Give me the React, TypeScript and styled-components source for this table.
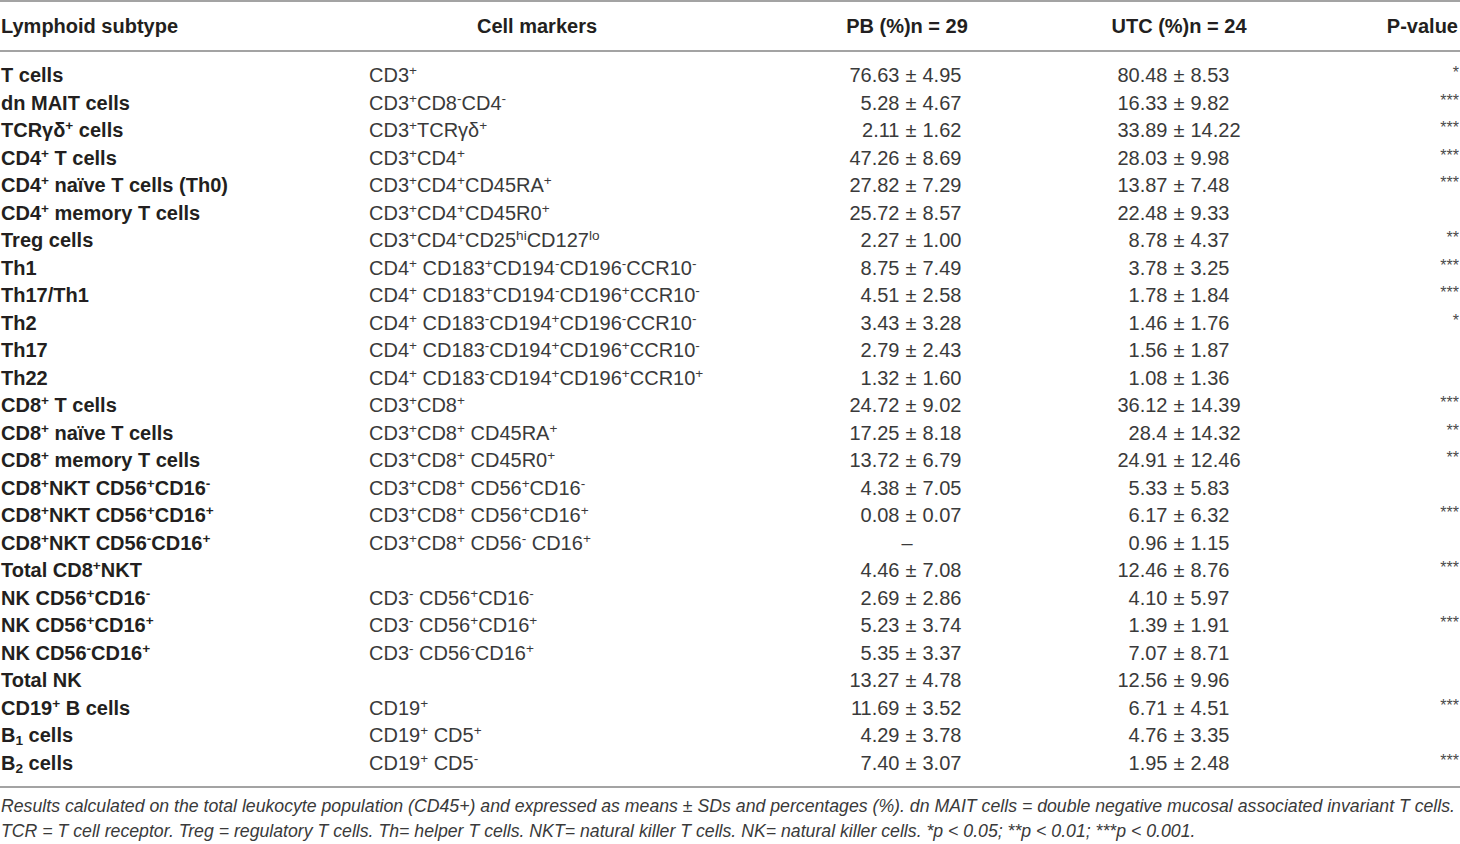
import React from "react"
import styled, { createGlobalStyle } from "styled-components"

const GlobalStyle = createGlobalStyle`
  body {
    margin: 0;
    background: #ffffff;
    font-family: "Liberation Sans", Arial, sans-serif;
    color: #231f20;
  }
`

const COLUMNS = "368px 336px 404px 140px 1fr"

const Page = styled.div`
  width: 1460px;
  padding-left: 1px;
  box-sizing: border-box;
`

const HeadRow = styled.div`
  display: grid;
  grid-template-columns: ${COLUMNS};
  align-items: center;
  height: 48px;
  border-top: 2px solid #a3a3a3;
  border-bottom: 2px solid #a3a3a3;
  margin-left: -1px;
  padding-left: 1px;
`

const HeadCell = styled.div<{ $align?: "left" | "center" | "right" }>`
  font-weight: 700;
  font-size: 20px;
  text-align: ${(p) => p.$align || "center"};
  white-space: nowrap;
  padding-right: ${(p) => (p.$align === "right" ? "2px" : "0")};
`

const Body = styled.div`
  padding: 10px 0 9px;
  border-bottom: 2px solid #a3a3a3;
  margin-left: -1px;
  padding-left: 1px;
`

const Row = styled.div`
  display: grid;
  grid-template-columns: ${COLUMNS};
  align-items: center;
  height: 27.5px;
  font-size: 20px;
  white-space: nowrap;
`

const Subtype = styled.div`
  font-weight: 700;
  color: #231f20;
`

const Markers = styled.div`
  color: #3a3a3a;
`

const Value = styled.div<{ $offset: number }>`
  display: grid;
  grid-template-columns: 1fr auto 1fr;
  padding-left: ${(p) => p.$offset}px;
  color: #3a3a3a;
`

const Mean = styled.span`
  text-align: right;
`

const Pm = styled.span`
  padding: 0 6px;
`

const Sd = styled.span`
  text-align: left;
`

const Dash = styled.div`
  text-align: center;
  color: #3a3a3a;
`

const Stars = styled.div`
  text-align: right;
  font-size: 16px;
  color: #4a4a4a;
  align-self: start;
  padding-top: 2px;
  padding-right: 1px;
`

const Sup = styled.sup`
  font-size: 0.68em;
  line-height: 0;
  vertical-align: 0.5em;
`

const Sub = styled.sub`
  font-size: 0.68em;
  line-height: 0;
  vertical-align: -0.25em;
`

const Note = styled.p`
  margin: 0;
  padding-top: 6px;
  font-style: italic;
  font-size: 17.7px;
  line-height: 25px;
  color: #3a3a3a;
  white-space: nowrap;
`

// ^x / ^{xx} = superscript, _x / _{xx} = subscript
const fmt = (s: string) =>
  s.split(/(\^\{[^}]*\}|\^.|_\{[^}]*\}|_.)/).map((part, i) => {
    if (part.startsWith("^")) {
      return <Sup key={i}>{part.slice(1).replace(/[{}]/g, "")}</Sup>
    }
    if (part.startsWith("_")) {
      return <Sub key={i}>{part.slice(1).replace(/[{}]/g, "")}</Sub>
    }
    return part
  })

type Entry = [string, string, string, string, string]

const rows: Entry[] = [
  ["T cells", "CD3^+", "76.63 ± 4.95", "80.48 ± 8.53", "*"],
  ["dn MAIT cells", "CD3^+CD8^-CD4^-", "5.28 ± 4.67", "16.33 ± 9.82", "***"],
  ["TCRγδ^+ cells", "CD3^+TCRγδ^+", "2.11 ± 1.62", "33.89 ± 14.22", "***"],
  ["CD4^+ T cells", "CD3^+CD4^+", "47.26 ± 8.69", "28.03 ± 9.98", "***"],
  ["CD4^+ naïve T cells (Th0)", "CD3^+CD4^+CD45RA^+", "27.82 ± 7.29", "13.87 ± 7.48", "***"],
  ["CD4^+ memory T cells", "CD3^+CD4^+CD45R0^+", "25.72 ± 8.57", "22.48 ± 9.33", ""],
  ["Treg cells", "CD3^+CD4^+CD25^{hi}CD127^{lo}", "2.27 ± 1.00", "8.78 ± 4.37", "**"],
  ["Th1", "CD4^+ CD183^+CD194^-CD196^-CCR10^-", "8.75 ± 7.49", "3.78 ± 3.25", "***"],
  ["Th17/Th1", "CD4^+ CD183^+CD194^-CD196^+CCR10^-", "4.51 ± 2.58", "1.78 ± 1.84", "***"],
  ["Th2", "CD4^+ CD183^-CD194^+CD196^-CCR10^-", "3.43 ± 3.28", "1.46 ± 1.76", "*"],
  ["Th17", "CD4^+ CD183^-CD194^+CD196^+CCR10^-", "2.79 ± 2.43", "1.56 ± 1.87", ""],
  ["Th22", "CD4^+ CD183^-CD194^+CD196^+CCR10^+", "1.32 ± 1.60", "1.08 ± 1.36", ""],
  ["CD8^+ T cells", "CD3^+CD8^+", "24.72 ± 9.02", "36.12 ± 14.39", "***"],
  ["CD8^+ naïve T cells", "CD3^+CD8^+ CD45RA^+", "17.25 ± 8.18", "28.4 ± 14.32", "**"],
  ["CD8^+ memory T cells", "CD3^+CD8^+ CD45R0^+", "13.72 ± 6.79", "24.91 ± 12.46", "**"],
  ["CD8^+NKT CD56^+CD16^-", "CD3^+CD8^+ CD56^+CD16^-", "4.38 ± 7.05", "5.33 ± 5.83", ""],
  ["CD8^+NKT CD56^+CD16^+", "CD3^+CD8^+ CD56^+CD16^+", "0.08 ± 0.07", "6.17 ± 6.32", "***"],
  ["CD8^+NKT CD56^-CD16^+", "CD3^+CD8^+ CD56^- CD16^+", "–", "0.96 ± 1.15", ""],
  ["Total CD8^+NKT", "", "4.46 ± 7.08", "12.46 ± 8.76", "***"],
  ["NK CD56^+CD16^-", "CD3^- CD56^+CD16^-", "2.69 ± 2.86", "4.10 ± 5.97", ""],
  ["NK CD56^+CD16^+", "CD3^- CD56^+CD16^+", "5.23 ± 3.74", "1.39 ± 1.91", "***"],
  ["NK CD56^-CD16^+", "CD3^- CD56^-CD16^+", "5.35 ± 3.37", "7.07 ± 8.71", ""],
  ["Total NK", "", "13.27 ± 4.78", "12.56 ± 9.96", ""],
  ["CD19^+ B cells", "CD19^+", "11.69 ± 3.52", "6.71 ± 4.51", "***"],
  ["B_1 cells", "CD19^+ CD5^+", "4.29 ± 3.78", "4.76 ± 3.35", ""],
  ["B_2 cells", "CD19^+ CD5^-", "7.40 ± 3.07", "1.95 ± 2.48", "***"],
]

const Stat: React.FC<{ text: string; offset?: number }> = ({ text, offset = 0 }) => {
  if (!text.includes("±")) return <Dash>{text}</Dash>
  const [mean, sd] = text.split(" ± ")
  return (
    <Value $offset={offset}>
      <Mean>{mean}</Mean>
      <Pm>±</Pm>
      <Sd>{sd}</Sd>
    </Value>
  )
}

const App: React.FC = () => {
  return (
    <Page>
      <GlobalStyle />
      <HeadRow>
        <HeadCell $align="left">Lymphoid subtype</HeadCell>
        <HeadCell>Cell markers</HeadCell>
        <HeadCell>PB (%)n = 29</HeadCell>
        <HeadCell>UTC (%)n = 24</HeadCell>
        <HeadCell $align="right">P-value</HeadCell>
      </HeadRow>
      <Body>
        {rows.map(([name, markers, pb, utc, p]) => (
          <Row key={name}>
            <Subtype>{fmt(name)}</Subtype>
            <Markers>{fmt(markers)}</Markers>
            <Stat text={pb} offset={8} />
            <Stat text={utc} />
            <Stars>{p}</Stars>
          </Row>
        ))}
      </Body>
      <Note>
        Results calculated on the total leukocyte population (CD45+) and expressed as means ± SDs and
        percentages (%). dn MAIT cells = double negative mucosal associated invariant T cells.
        <br />
        TCR = T cell receptor. Treg = regulatory T cells. Th= helper T cells. NKT= natural killer T
        cells. NK= natural killer cells. *p &lt; 0.05; **p &lt; 0.01; ***p &lt; 0.001.
      </Note>
    </Page>
  )
}

export default App
